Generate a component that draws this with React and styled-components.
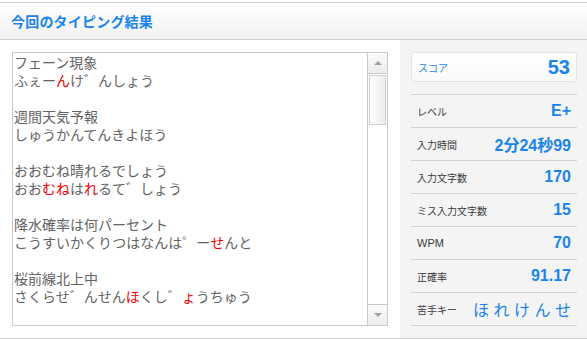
import React from "react";
import styled, { createGlobalStyle } from "styled-components";

const GlobalStyle = createGlobalStyle`
  html, body { margin: 0; padding: 0; background: #fff; }
  body { font-family: "Noto Sans CJK JP", "Noto Sans", sans-serif; }
`;

const BLUE = "#1a84ea";
const LINE = "#d2d2d2";

const Page = styled.div`
  padding-top: 2px;
  width: 587px;
`;

const Header = styled.header`
  height: 36px;
  border-top: 1px solid ${LINE};
  border-bottom: 1px solid ${LINE};
  background: linear-gradient(#ffffff, #f1f1f1);
  display: flex;
  align-items: center;
  padding-left: 11px;
`;

const Title = styled.h2`
  margin: 0;
  font-size: 14px;
  font-weight: 700;
  color: ${BLUE};
  font-family: "Noto Sans CJK JP", sans-serif;
  letter-spacing: 0.2px;
`;

const Content = styled.div`
  display: flex;
  height: 298px;
  border-bottom: 1px solid ${LINE};
`;

const LeftCol = styled.div`
  width: 400px;
  box-sizing: border-box;
  padding: 12px;
  background: #fff;
`;

const TextBox = styled.div`
  height: 274px;
  box-sizing: border-box;
  border: 1px solid #c9c9c9;
  display: flex;
`;

const TextArea = styled.div`
  flex: 1;
  padding: 0 0 0 1px;
  overflow: hidden;
  font-family: "Noto Sans CJK JP", sans-serif;
  font-size: 14px;
  line-height: 18px;
  color: #636363;
  font-weight: 400;
`;

const Line = styled.div`
  height: 18px;
  white-space: pre;
`;

const Miss = styled.span`
  color: #f00000;
`;

const Scrollbar = styled.div`
  width: 19px;
  border-left: 1px solid #c9c9c9;
  display: flex;
  flex-direction: column;
  background: #fff;
`;

const ScrollButton = styled.div`
  height: 20px;
  background: linear-gradient(#fbfbfb, #ececec);
  ${(p) => (p.$down ? `border-top: 1px solid #c9c9c9;` : `border-bottom: 1px solid #c9c9c9;`)}
  display: flex;
  align-items: center;
  justify-content: center;
`;

const Arrow = styled.div`
  width: 0;
  height: 0;
  border-left: 4px solid transparent;
  border-right: 4px solid transparent;
  ${(p) =>
    p.$down ? `border-top: 4px solid #a0a0a0;` : `border-bottom: 4px solid #a0a0a0;`}
`;

const Track = styled.div`
  flex: 1;
  display: flex;
  flex-direction: column;
  padding: 1px;
`;

const Thumb = styled.div`
  height: 48px;
  border: 1px solid #cfcfcf;
  background: linear-gradient(90deg, #fdfdfd, #ededed);
`;

const RightCol = styled.div`
  flex: 1;
  background: #f4f4f4;
  padding: 12px 10px 0 11px;
  display: flex;
  flex-direction: column;
`;

const ScoreBox = styled.div`
  height: 30px;
  box-sizing: border-box;
  border: 1px solid #e3e3e3;
  border-radius: 3px;
  background: linear-gradient(#ffffff, #f9f9f9);
  display: flex;
  align-items: center;
  justify-content: space-between;
  padding: 0 6px;
`;

const ScoreLabel = styled.span`
  font-size: 10px;
  color: ${BLUE};
  font-family: "Noto Sans CJK JP", sans-serif;
`;

const ScoreValue = styled.span`
  font-family: "Liberation Sans", "Noto Sans CJK JP", sans-serif;
  font-weight: 700;
  font-size: 20px;
  color: ${BLUE};
  margin-top: 1px;
`;

const Rows = styled.div`
  margin-top: 12px;
  border-bottom: 1px solid ${LINE};
`;

const Row = styled.div`
  height: 32px;
  border-top: 1px solid ${LINE};
  display: flex;
  align-items: center;
  justify-content: space-between;
  padding: 0 6px;
`;

const Label = styled.span`
  font-size: 10px;
  color: #3a3a3a;
  font-family: "Noto Sans CJK JP", sans-serif;
`;

const LatinLabel = styled(Label)`
  font-family: "Liberation Sans", sans-serif;
  font-size: 11px;
`;

const Value = styled.span`
  font-family: "Liberation Sans", "Noto Sans CJK JP", sans-serif;
  font-weight: 700;
  font-size: 16px;
  color: ${BLUE};
`;

const Keys = styled.span`
  font-family: "Noto Sans CJK JP", sans-serif;
  font-weight: 400;
  font-size: 16px;
  color: ${BLUE};
  letter-spacing: 4.5px;
  margin-right: -4.5px;
`;

const lines = [
  ["フェーン現象"],
  ["ふぇー", { m: "ん" }, "け゛んしょう"],
  [],
  ["週間天気予報"],
  ["しゅうかんてんきよほう"],
  [],
  ["おおむね晴れるでしょう"],
  ["おお", { m: "むね" }, "は", { m: "れ" }, "るて゛しょう"],
  [],
  ["降水確率は何パーセント"],
  ["こうすいかくりつはなんは゜ー", { m: "せ" }, "んと"],
  [],
  ["桜前線北上中"],
  ["さくらせ゛んせん", { m: "ほ" }, "くし゛", { m: "ょ" }, "うちゅう"],
];

const stats = [
  ["レベル", "E+"],
  ["入力時間", "2分24秒99"],
  ["入力文字数", "170"],
  ["ミス入力文字数", "15"],
  ["WPM", "70", true],
  ["正確率", "91.17"],
];

export default function App() {
  return (
    <>
      <GlobalStyle />
      <Page>
        <Header>
          <Title>今回のタイピング結果</Title>
        </Header>
        <Content>
          <LeftCol>
            <TextBox>
              <TextArea>
                {lines.map((parts, i) => (
                  <Line key={i}>
                    {parts.map((p, j) =>
                      typeof p === "string" ? (
                        <React.Fragment key={j}>{p}</React.Fragment>
                      ) : (
                        <Miss key={j}>{p.m}</Miss>
                      )
                    )}
                  </Line>
                ))}
              </TextArea>
              <Scrollbar>
                <ScrollButton>
                  <Arrow />
                </ScrollButton>
                <Track>
                  <Thumb />
                </Track>
                <ScrollButton $down>
                  <Arrow $down />
                </ScrollButton>
              </Scrollbar>
            </TextBox>
          </LeftCol>
          <RightCol>
            <ScoreBox>
              <ScoreLabel>スコア</ScoreLabel>
              <ScoreValue>53</ScoreValue>
            </ScoreBox>
            <Rows>
              {stats.map(([l, v, latin]) => (
                <Row key={l}>
                  {latin ? <LatinLabel>{l}</LatinLabel> : <Label>{l}</Label>}
                  <Value>{v}</Value>
                </Row>
              ))}
              <Row>
                <Label>苦手キー</Label>
                <Keys>ほれけんせ</Keys>
              </Row>
            </Rows>
          </RightCol>
        </Content>
      </Page>
    </>
  );
}
